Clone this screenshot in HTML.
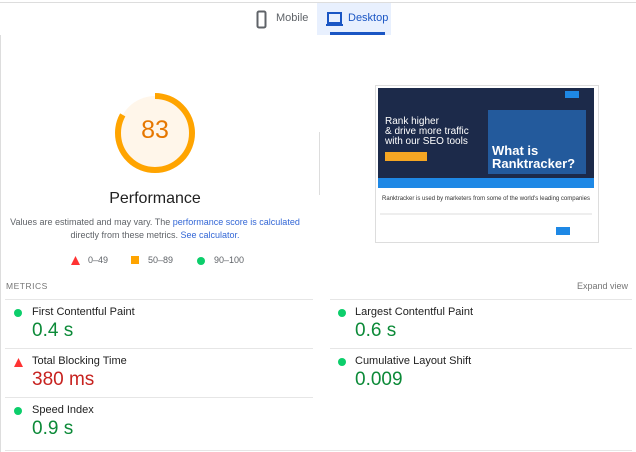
<!DOCTYPE html>
<html><head><style>
*{margin:0;padding:0;box-sizing:border-box}
body{width:636px;height:452px;background:#fff;font-family:"Liberation Sans",Arial,sans-serif;position:relative;overflow:hidden;color:#212121}
.a{position:absolute}
.lbl{font-size:11px;color:#212121}
.val{font-size:19px}
.g{color:#0c8a38}
.r{color:#c7221f}
.dot{width:8px;height:8px;border-radius:50%;background:#0cce6b}
.hl{height:1px;background:#e6e6e6}
</style></head><body>
<div class="a" style="left:0;top:2px;width:636px;height:1px;background:#ddd"></div>
<div class="a" style="left:0;top:35px;width:1px;height:417px;background:#ddd"></div>
<svg class="a" style="left:256px;top:10px" width="12" height="20"><rect x="1.5" y="1.5" width="8" height="16" rx="1.5" fill="none" stroke="#5f6368" stroke-width="2"/></svg>
<div class="a" style="left:276px;top:12px;font-size:11px;color:#5f6368">Mobile</div>
<div class="a" style="left:317px;top:3px;width:74px;height:32px;background:#e8f0fe"></div>
<div class="a" style="left:330px;top:32px;width:55px;height:3px;background:#1a56c4"></div>
<svg class="a" style="left:326px;top:11px" width="18" height="16"><rect x="2" y="2" width="13" height="10" fill="none" stroke="#1a56c4" stroke-width="2"/><rect x="0" y="13" width="17" height="2" fill="#1a56c4"/></svg>
<div class="a" style="left:348px;top:12px;font-size:11px;color:#1a56c4">Desktop</div>
<svg class="a" style="left:113px;top:91px" width="84" height="84">
<circle cx="42" cy="42" r="37" fill="#fff6ea"/>
<circle cx="42" cy="42" r="37" fill="none" stroke="#ffa400" stroke-width="6" stroke-dasharray="193 300" transform="rotate(-90 42 42)"/>
</svg>
<div class="a" style="left:113px;top:116px;width:84px;text-align:center;font-size:25px;color:#e67700">83</div>
<div class="a" style="left:55px;top:190px;width:200px;text-align:center;font-size:16px;color:#212121">Performance</div>
<div class="a" style="left:5px;top:216px;width:300px;text-align:center;font-size:9px;line-height:13px;color:#5f6368">Values are estimated and may vary. The <span style="color:#3367d6">performance score is calculated</span><br>directly from these metrics. <span style="color:#3367d6">See calculator.</span></div>
<svg class="a" style="left:71px;top:256px" width="9" height="9"><polygon points="4.5,0 9,9 0,9" fill="#f33"/></svg>
<div class="a" style="left:88px;top:255px;font-size:9px;color:#5f6368">0–49</div>
<div class="a" style="left:131px;top:256px;width:8px;height:8px;background:#ffa400"></div>
<div class="a" style="left:148px;top:255px;font-size:9px;color:#5f6368">50–89</div>
<div class="a dot" style="left:197px;top:257px"></div>
<div class="a" style="left:214px;top:255px;font-size:9px;color:#5f6368">90–100</div>
<div class="a" style="left:319px;top:132px;width:1px;height:63px;background:#ddd"></div>
<div class="a" style="left:375px;top:85px;width:224px;height:158px;border:1px solid #ddd;background:#fff"></div>
<div class="a" style="left:378px;top:88px;width:216px;height:100px;background:#1c2a4a"></div>
<div class="a" style="left:378px;top:178px;width:216px;height:10px;background:#1e88e5"></div>
<div class="a" style="left:488px;top:110px;width:98px;height:64px;background:#235a9c"></div>
<div class="a" style="left:565px;top:91px;width:14px;height:7px;background:#1e88e5"></div>
<div class="a" style="left:385px;top:117px;font-size:10px;line-height:10px;color:#fff">Rank higher<br>&amp; drive more traffic<br>with our SEO tools</div>
<div class="a" style="left:385px;top:152px;width:42px;height:9px;background:#f5a623"></div>
<div class="a" style="left:492px;top:144px;font-size:13px;line-height:13px;font-weight:bold;color:#fff">What is<br>Ranktracker?</div>
<div class="a" style="left:378px;top:196px;width:216px;text-align:center;font-size:6px;color:#333">Ranktracker is used by marketers from some of the world's leading companies</div>
<div class="a" style="left:380px;top:213px;width:212px;height:2px;background:#eee"></div>
<div class="a" style="left:556px;top:227px;width:14px;height:8px;background:#1e88e5"></div>
<div class="a" style="left:6px;top:281px;font-size:8.5px;letter-spacing:.5px;color:#757575">METRICS</div>
<div class="a" style="left:577px;top:281px;font-size:9px;color:#757575">Expand view</div>
<div class="a hl" style="left:5px;top:299px;width:308px"></div>
<div class="a hl" style="left:330px;top:299px;width:302px"></div>
<div class="a hl" style="left:5px;top:348px;width:308px"></div>
<div class="a hl" style="left:330px;top:348px;width:302px"></div>
<div class="a hl" style="left:5px;top:397px;width:308px"></div>
<div class="a hl" style="left:5px;top:450px;width:627px"></div>
<div class="a dot" style="left:14px;top:309px"></div>
<div class="a lbl" style="left:32px;top:306px">First Contentful Paint</div>
<div class="a val g" style="left:32px;top:320px">0.4 s</div>
<svg class="a" style="left:14px;top:358px" width="9" height="9"><polygon points="4.5,0 9,9 0,9" fill="#f33"/></svg>
<div class="a lbl" style="left:32px;top:355px">Total Blocking Time</div>
<div class="a val r" style="left:32px;top:369px">380 ms</div>
<div class="a dot" style="left:14px;top:407px"></div>
<div class="a lbl" style="left:32px;top:404px">Speed Index</div>
<div class="a val g" style="left:32px;top:418px">0.9 s</div>
<div class="a dot" style="left:338px;top:309px"></div>
<div class="a lbl" style="left:355px;top:306px">Largest Contentful Paint</div>
<div class="a val g" style="left:355px;top:320px">0.6 s</div>
<div class="a dot" style="left:338px;top:358px"></div>
<div class="a lbl" style="left:355px;top:355px">Cumulative Layout Shift</div>
<div class="a val g" style="left:355px;top:369px">0.009</div>
</body></html>
